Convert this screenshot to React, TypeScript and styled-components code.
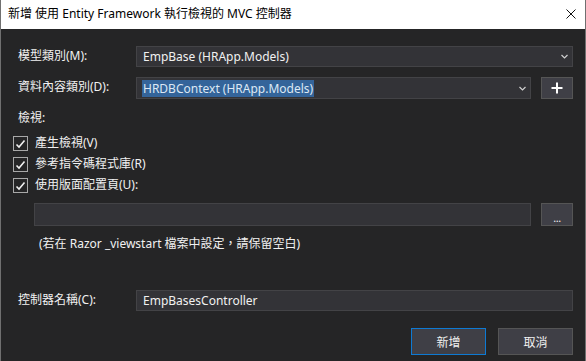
import React from 'react'
import styled, { createGlobalStyle } from 'styled-components'

const Global = createGlobalStyle`
    html, body {
        margin: 0;
        padding: 0;
        background: #252526;
    }
    body {
        font-family: "Noto Sans", "Noto Sans CJK TC", sans-serif;
        font-size: 12px;
    }
`

const Window = styled.div`
    width: 586px;
    height: 361px;
    box-sizing: border-box;
    display: flex;
    flex-direction: column;
    border-left: 1px solid #707070;
    border-right: 1px solid #707070;
    background: #252526;
    overflow: hidden;
`

const TitleBar = styled.div`
    height: 29px;
    flex-shrink: 0;
    display: flex;
    align-items: center;
    justify-content: space-between;
    background: #ffffff;
    color: #000000;
    padding: 0 9px 0 7px;
    font-size: 12px;
`

const Title = styled.div`
    line-height: 16px;
    margin-top: -1px;
`

const CloseBtn = styled.div`
    width: 10px;
    height: 10px;
    display: flex;
    margin-top: -2px;
`

const Body = styled.div`
    flex: 1;
    display: flex;
    flex-direction: column;
    padding: 0 12px 0 17px;
    color: #f1f1f1;
`

const FieldRow = styled.div<{ $top: number; $height: number }>`
    display: flex;
    align-items: center;
    margin-top: ${p => p.$top}px;
    height: ${p => p.$height}px;
`

const Label = styled.div`
    width: 118px;
    flex-shrink: 0;
    line-height: 16px;
    margin-top: -2px;
`

const Box = styled.div`
    flex: 1;
    height: 100%;
    box-sizing: border-box;
    display: flex;
    align-items: center;
    background: #333337;
    border: 1px solid #434346;
    padding: 0 4px 0 5px;
    min-width: 0;
`

const BoxText = styled.span<{ $selected?: boolean }>`
    line-height: 17px;
    padding: 0 1px;
    color: ${p => (p.$selected ? '#dce8f5' : '#f1f1f1')};
    background: ${p => (p.$selected ? '#34649a' : 'transparent')};
    white-space: nowrap;
`

const Chevron = styled.svg`
    margin-left: auto;
    flex-shrink: 0;
`

const SideButton = styled.div`
    width: 32px;
    height: 100%;
    box-sizing: border-box;
    margin-left: 10px;
    display: flex;
    align-items: center;
    justify-content: center;
    background: #3f3f46;
    border: 1px solid #555555;
    color: #f1f1f1;
    flex-shrink: 0;
`

const Dots = styled.span`
    font-size: 11px;
    line-height: 1;
    margin-top: 6px;
    letter-spacing: -0.5px;
`

const SectionLabel = styled.div`
    margin-top: 11px;
    line-height: 16px;
`

const CheckList = styled.div`
    display: flex;
    flex-direction: column;
    margin-top: 7px;
    margin-left: -5px;
`

const CheckRow = styled.div`
    display: flex;
    align-items: center;
    height: 21px;
`

const CheckBox = styled.div`
    width: 15px;
    height: 15px;
    box-sizing: border-box;
    border: 1px solid #a8a8a8;
    background: #252526;
    display: flex;
    align-items: center;
    justify-content: center;
    margin-right: 7px;
`

const CheckText = styled.span`
    line-height: 16px;
    margin-top: -1px;
`

const LayoutRow = styled.div`
    display: flex;
    height: 23px;
    margin-top: 7px;
    padding-left: 16px;
`

const Hint = styled.div`
    margin-top: 10px;
    padding-left: 21px;
    line-height: 16px;
`

const Footer = styled.div`
    display: flex;
    justify-content: flex-end;
    gap: 12px;
    margin-top: 17px;
`

const Button = styled.div<{ $primary?: boolean }>`
    width: 75px;
    height: 27px;
    box-sizing: border-box;
    display: flex;
    align-items: center;
    justify-content: center;
    background: #3f3f46;
    border: 1px solid ${p => (p.$primary ? '#0e7ad3' : '#555555')};
    color: #f1f1f1;
`

function Arrow() {
    return (
        <Chevron width="7" height="5" viewBox="0 0 7 5">
            <polyline points="0.5,1 3.5,4 6.5,1" fill="none" stroke="#d0d0d0" strokeWidth="1.2" />
        </Chevron>
    )
}

function Check() {
    return (
        <svg width="11" height="10" viewBox="0 0 11 10">
            <polyline points="1.5,5.5 4,8 9.5,1.5" fill="none" stroke="#f1f1f1" strokeWidth="1.6" />
        </svg>
    )
}

const options = ['產生檢視(V)', '參考指令碼程式庫(R)', '使用版面配置頁(U):']

export default function App() {
    return (
        <Window>
            <Global />
            <TitleBar>
                <Title>新增 使用 Entity Framework 執行檢視的 MVC 控制器</Title>
                <CloseBtn>
                    <svg width="10" height="10" viewBox="0 0 10 10">
                        <path d="M0.5 0.5 L9.5 9.5 M9.5 0.5 L0.5 9.5" stroke="#111" strokeWidth="1" />
                    </svg>
                </CloseBtn>
            </TitleBar>
            <Body>
                <FieldRow $top={17} $height={21}>
                    <Label>模型類別(M):</Label>
                    <Box>
                        <BoxText>EmpBase (HRApp.Models)</BoxText>
                        <Arrow />
                    </Box>
                </FieldRow>
                <FieldRow $top={10} $height={22}>
                    <Label>資料內容類別(D):</Label>
                    <Box>
                        <BoxText $selected>HRDBContext (HRApp.Models)</BoxText>
                        <Arrow />
                    </Box>
                    <SideButton>
                        <svg width="12" height="12" viewBox="0 0 12 12">
                            <path d="M6 0.5 V11.5 M0.5 6 H11.5" stroke="#ffffff" strokeWidth="2" />
                        </svg>
                    </SideButton>
                </FieldRow>
                <SectionLabel>檢視:</SectionLabel>
                <CheckList>
                    {options.map(o => (
                        <CheckRow key={o}>
                            <CheckBox><Check /></CheckBox>
                            <CheckText>{o}</CheckText>
                        </CheckRow>
                    ))}
                </CheckList>
                <LayoutRow>
                    <Box />
                    <SideButton><Dots>...</Dots></SideButton>
                </LayoutRow>
                <Hint>(若在 Razor _viewstart 檔案中設定，請保留空白)</Hint>
                <FieldRow $top={38} $height={21}>
                    <Label>控制器名稱(C):</Label>
                    <Box>
                        <BoxText>EmpBasesController</BoxText>
                    </Box>
                </FieldRow>
                <Footer>
                    <Button $primary>新增</Button>
                    <Button>取消</Button>
                </Footer>
            </Body>
        </Window>
    )
}
